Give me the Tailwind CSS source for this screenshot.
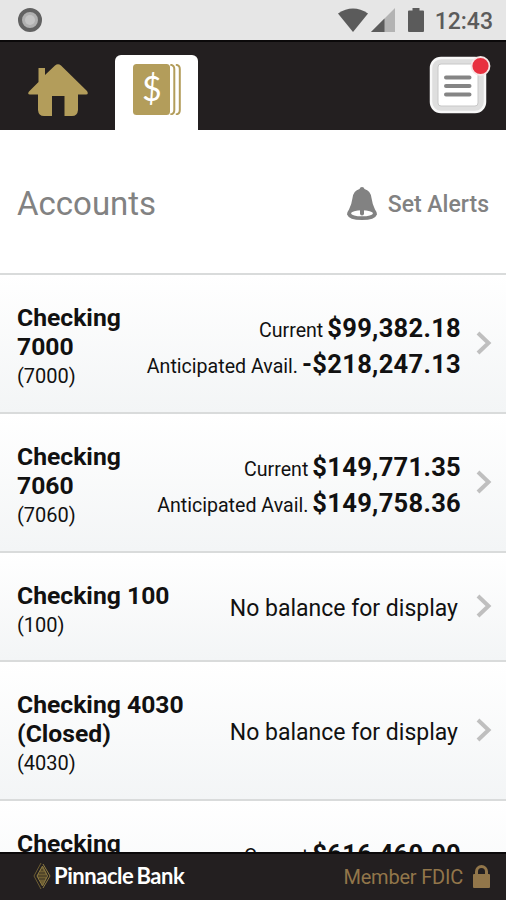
<!DOCTYPE html>
<html lang="en">
<head>
  <meta charset="UTF-8">
  <meta name="viewport" content="width=device-width, initial-scale=1.0">
  <script src="https://cdn.jsdelivr.net/npm/@tailwindcss/browser@4"></script>
  <title>Accounts - Pinnacle Bank</title>
</head>
<body class="bg-white font-['Roboto',sans-serif] text-[#111]">
  <div class="w-[506px] h-[900px] flex flex-col overflow-hidden">

    <!-- Status bar -->
    <div class="h-10 shrink-0 bg-[#e6e6e6] flex items-center justify-between pl-[18px] pr-[13px]">
      <svg class="w-6 h-6" viewBox="0 0 24 24">
        <circle cx="12" cy="12" r="10" fill="#b0b0b0" stroke="#626262" stroke-width="4"/>
        <circle cx="12" cy="12" r="5" fill="#c4c4c4"/>
      </svg>
      <div class="flex items-center text-[#5b5b5b]">
        <svg class="w-[30px] h-6" viewBox="0 0 30 24"><path d="M0 5.500Q15-4.500 30 5.500L15 24Z" fill="currentColor"/></svg>
        <svg class="w-6 h-6 ml-[3px]" viewBox="0 0 24 24">
          <path d="M24 0V24H0Z" fill="#b3b3b3"/>
          <path d="M13.500 10.500V24H0Z" fill="currentColor"/>
        </svg>
        <svg class="w-4 h-6 ml-[13px]" viewBox="0 0 16 24"><path d="M4.500 0h7v2.500H15Q16 2.500 16 3.500V23q0 1-1 1H1q-1 0-1-1V3.500q0-1 1-1h3.500Z" fill="currentColor"/></svg>
        <span class="ml-[11px] pt-0.5 text-[23px] leading-none font-medium">12:43</span>
      </div>
    </div>

    <!-- Tabs -->
    <div class="h-[90px] shrink-0 bg-[#231f20] border-t-2 border-[#0b090a] flex justify-between">
      <div class="flex">
        <svg class="w-[60px] h-[53px] ml-7 mt-[22px]" viewBox="0 0 60 53" fill="#b39d5b">
          <path d="M10.500 4H17V11L27 1.500Q30-1 33 1.500L59 27Q61 30.500 58 30.500H50V46Q49.500 52 44 52H36.500V32H24V52H16Q10.500 52 10 46V30.500H2Q-1 30.500 1 27.500L10.500 18Z"/>
        </svg>
        <div class="w-[83px] h-[77px] ml-[27px] mt-[13px] bg-white rounded-t-md pl-[18px] pt-[9px]">
          <svg class="w-12 h-[51px]" viewBox="0 0 48 51">
            <rect width="37" height="51" rx="3.500" fill="#b39d5b"/>
            <path d="M37 .8Q41 1 41 5V46Q41 50 37 50.500M42.500 .8Q46.500 1 46.500 5V46Q46.500 50 42.500 50.500" transform="translate(.3)" fill="none" stroke="#b39d5b" stroke-width="2"/>
            <text x="18.800" y="37" text-anchor="middle" font-family="Lato" font-size="34" fill="#fff">$</text>
          </svg>
        </div>
      </div>
      <svg class="w-[64px] h-[60px] mr-[13px] mt-[13px]" viewBox="0 0 64 60">
        <rect x="2" y="3" width="54" height="54" rx="10" fill="#dedede" stroke="#f8f8f8" stroke-width="2.500"/>
        <rect x="9" y="9" width="40" height="42" rx="3" fill="#fff" stroke="#c8c8c8"/>
        <path d="M17 22.500H40.500M17 31H40.500M17 39.500H40.500" stroke="#858585" stroke-width="4" stroke-linecap="round"/>
        <circle cx="51.500" cy="11" r="9" fill="#e8303f" stroke="#f5e6e6" stroke-width="1.800"/>
      </svg>
    </div>

    <!-- Page title -->
    <div class="h-[143px] shrink-0 flex items-center justify-between px-[17px] pt-[3px] text-[#828282]">
      <h1 class="text-[33px] leading-none">Accounts</h1>
      <div class="flex items-center">
        <svg class="w-[30px] h-[33px] mr-[11px]" viewBox="0 0 30 33">
          <path d="M15 0Q17 0 17.500 2Q23.500 3.500 24.500 11Q25.500 18 28 22.500Q30 25 30 27.500Q28 33 15 33T0 27.500Q0 25 2 22.500Q4.500 18 5.500 11Q6.500 3.500 12.500 2Q13 0 15 0Z" fill="currentColor"/>
          <ellipse cx="15" cy="26.300" rx="11" ry="3" fill="#fff"/>
          <path d="M13 23h4v3.500a2 2 0 0 1-4 0Z" fill="currentColor"/>
        </svg>
        <span class="pt-0.5 text-[23px] leading-none font-medium">Set Alerts</span>
      </div>
    </div>

    <!-- Accounts list -->
    <div id="accounts" class="h-[579px] shrink-0 overflow-hidden"></div>

    <!-- Footer -->
    <div class="h-12 shrink-0 bg-[#231f20] border-t-2 border-[#0b090a] flex items-center justify-between pl-[33px] pr-4">
      <div class="flex items-center pb-0.5">
        <svg class="w-[18px] h-7" viewBox="0 0 18 28" fill="none" stroke="#8f7c42">
          <path d="M8 1L1 14L8 27" stroke="#6d5d32"/>
          <path d="M10 2L17 14L10 26"/>
          <path d="M9.500 4L14.500 14L9.500 24L4 14Z" fill="#6d5d32"/>
          <path d="M5 14H14M6 11H12M6 17H12M8 8H10" stroke="#3b3222"/>
        </svg>
        <span class="ml-[3px] text-[22px] leading-6 font-bold tracking-[-0.45px] text-white font-['Lato',sans-serif] whitespace-nowrap">Pinnacle<span class="ml-[3px]">Bank</span></span>
      </div>
      <div class="flex items-center text-[#92764a]">
        <span class="text-[20px] leading-6 tracking-[-0.2px]">Member FDIC</span>
        <svg class="w-[17px] h-[23px] ml-[10px] mb-0.5" viewBox="0 0 17 23">
          <path d="M3.500 10V6.500a5 5 0 0 1 10 0V10" fill="none" stroke="currentColor" stroke-width="3"/>
          <rect y="9" width="17" height="14" rx="1" fill="currentColor"/>
        </svg>
      </div>
    </div>
  </div>

  <script>
    const accounts = [
      { name: "Checking<br>7000", number: "7000", current: "$99,382.18", available: "-$218,247.13" },
      { name: "Checking<br>7060", number: "7060", current: "$149,771.35", available: "$149,758.36" },
      { name: "Checking 100", number: "100" },
      { name: "Checking 4030<br>(Closed)", number: "4030" },
      { name: "Checking", number: "", current: "$616,460.00" },
    ];

    function balanceRow(label, amount) {
      return `<div class="h-9 text-[19.6px] leading-9 whitespace-nowrap">${label}<span class="ml-[4px] text-[25.5px] font-bold tracking-[0.3px]">${amount}</span></div>`;
    }

    const list = document.getElementById("accounts");

    accounts.forEach((account) => {
      const row = document.createElement("div");
      row.className = "flex justify-between border-t-2 border-[#d9dbdb] bg-linear-to-b from-white to-[#f3f5f6] pl-[17px] pr-[14px] " + (account.name === "Checking 100" ? "h-[109px]" : "h-[139px]");
      const balance = account.current
        ? balanceRow("Current", account.current) + (account.available ? balanceRow("Anticipated Avail.", account.available) : `<div class="h-9"></div>`)
        : `<div class="text-[23px] leading-9 pr-[3px]">No balance for display</div>`;
      row.innerHTML = `
        <div class="shrink-0 pt-7">
          <h2 class="text-[24.7px] leading-[29px] font-bold">${account.name}</h2>
          ${account.number ? `<p class="text-[20px] leading-[30px]">(${account.number})</p>` : ""}
        </div>
        <div class="flex items-center">
          <div class="text-right pt-1">${balance}</div>
          <svg class="w-4 h-6 ml-[15px] mb-px" viewBox="0 0 16 24" fill="none" stroke="#bfbfbf" stroke-width="4"><path d="M2 2L12.500 12L2 22"/></svg>
        </div>
      `;
      list.appendChild(row);
    });
  </script>
</body>
</html>
